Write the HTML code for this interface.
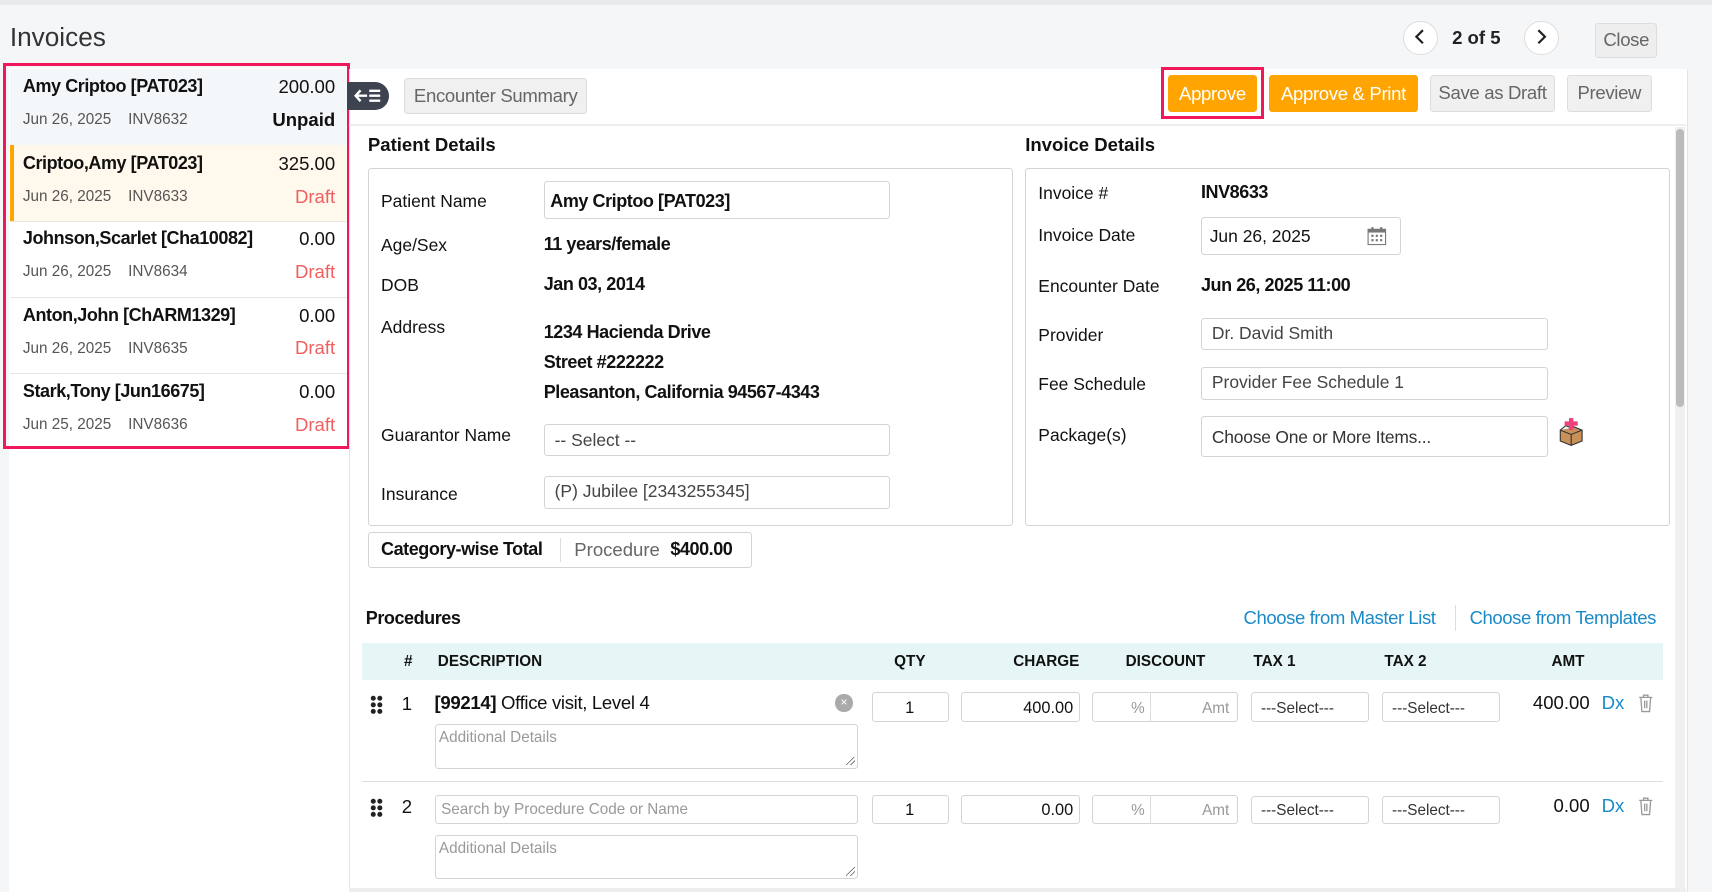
<!DOCTYPE html>
<html><head><meta charset="utf-8"><style>
html,body{margin:0;padding:0;}
body{width:1712px;height:892px;overflow:hidden;background:#f5f6f8;font-family:"Liberation Sans",sans-serif;color:#111;}
#r{position:relative;width:1568px;height:817px;zoom:1.0918;}
.a{position:absolute;white-space:nowrap;}
.in{position:absolute;border:1px solid #d4d4d4;border-radius:3px;background:#fff;box-sizing:border-box;}
.b{font-weight:bold;}
.lbl{font-size:16px;color:#111;}
.btn{position:absolute;border-radius:3px;font-size:17px;box-sizing:border-box;text-align:center;letter-spacing:-0.3px;}
.g{color:#555;}
.ph{color:#999;font-size:14px;}
.nm{font-size:16.5px;letter-spacing:-0.4px;font-weight:bold;}
.rs{position:absolute;width:8px;height:8px;background:linear-gradient(135deg,transparent 45%,#666 46%,#666 52%,transparent 53%,transparent 70%,#666 71%,#666 77%,transparent 78%);}
</style></head><body><div id="r">
<div class="a" style="left:0;top:0;width:1568px;height:5px;background:#e9eaec"></div>
<div class="a" style="left:9px;top:20px;font-size:24px;color:#333">Invoices</div>
<!-- pager -->
<div class="a" style="left:1285px;top:19px;width:30px;height:30px;border:1px solid #ddd;border-radius:50%;background:#fff"></div>
<svg class="a" style="left:1293px;top:26px" width="14" height="16"><path d="M10 2 L4 8 L10 14" fill="none" stroke="#222" stroke-width="2"/></svg>
<div class="a b" style="left:1330px;top:25px;font-size:17px;color:#222">2 of 5</div>
<div class="a" style="left:1396px;top:19px;width:30px;height:30px;border:1px solid #ddd;border-radius:50%;background:#fff"></div>
<svg class="a" style="left:1405px;top:26px" width="14" height="16"><path d="M4 2 L10 8 L4 14" fill="none" stroke="#222" stroke-width="2"/></svg>
<div class="btn" style="left:1461px;top:21px;width:57px;height:32px;background:#eee;border:1px solid #ddd;color:#666;line-height:30px">Close</div>

<!-- left list -->
<div class="a" style="left:8px;top:62px;width:312px;height:755px;background:#fff;border-right:1px solid #e3e3e3"></div>
<div class="a" style="left:9px;top:63px;width:310px;height:70px;background:#f4f7fa"></div>
<div class="a" style="left:9px;top:133px;width:310px;height:70px;background:#fff8ec;border-left:4px solid #ffa500;box-sizing:border-box"></div>
<div class="a" style="left:9px;top:202px;width:310px;height:1px;background:#e6e6e6"></div>
<div class="a" style="left:9px;top:272px;width:310px;height:1px;background:#e6e6e6"></div>
<div class="a" style="left:9px;top:342px;width:310px;height:1px;background:#e6e6e6"></div>
<div class="a" style="left:3px;top:58px;width:318px;height:353px;border:3px solid #f0185a;box-sizing:border-box"></div>

<div class="a nm" style="left:21px;top:70px">Amy Criptoo [PAT023]</div>
<div class="a" style="right:1261px;top:70px;font-size:17px">200.00</div>
<div class="a g" style="left:21px;top:102px;font-size:14px">Jun 26, 2025 &nbsp;&nbsp; INV8632</div>
<div class="a b" style="right:1261px;top:100px;font-size:17px">Unpaid</div>

<div class="a nm" style="left:21px;top:140px">Criptoo,Amy [PAT023]</div>
<div class="a" style="right:1261px;top:140px;font-size:17px">325.00</div>
<div class="a g" style="left:21px;top:172px;font-size:14px">Jun 26, 2025 &nbsp;&nbsp; INV8633</div>
<div class="a" style="right:1261px;top:170px;font-size:17px;color:#f06060">Draft</div>

<div class="a nm" style="left:21px;top:209px">Johnson,Scarlet [Cha10082]</div>
<div class="a" style="right:1261px;top:209px;font-size:17px">0.00</div>
<div class="a g" style="left:21px;top:241px;font-size:14px">Jun 26, 2025 &nbsp;&nbsp; INV8634</div>
<div class="a" style="right:1261px;top:239px;font-size:17px;color:#f06060">Draft</div>

<div class="a nm" style="left:21px;top:279px">Anton,John [ChARM1329]</div>
<div class="a" style="right:1261px;top:279px;font-size:17px">0.00</div>
<div class="a g" style="left:21px;top:311px;font-size:14px">Jun 26, 2025 &nbsp;&nbsp; INV8635</div>
<div class="a" style="right:1261px;top:309px;font-size:17px;color:#f06060">Draft</div>

<div class="a nm" style="left:21px;top:349px">Stark,Tony [Jun16675]</div>
<div class="a" style="right:1261px;top:349px;font-size:17px">0.00</div>
<div class="a g" style="left:21px;top:381px;font-size:14px">Jun 25, 2025 &nbsp;&nbsp; INV8636</div>
<div class="a" style="right:1261px;top:379px;font-size:17px;color:#f06060">Draft</div>

<!-- main panel -->
<div class="a" style="left:320px;top:63px;width:1224px;height:754px;background:#fff;border-left:1px solid #e3e3e3;border-right:1px solid #e3e3e3"></div>
<div class="a" style="left:320px;top:114px;width:1224px;height:1px;background:#eee"></div>
<div class="a" style="left:1534px;top:116px;width:9px;height:700px;background:#f0f0f0"></div>
<div class="a" style="left:1535px;top:118px;width:7px;height:255px;background:#bbb;border-radius:4px"></div>
<div class="a" style="left:318px;top:75px;width:38px;height:26px;background:#3d4450;border-radius:0 13px 13px 0"></div>
<svg class="a" style="left:324px;top:80px" width="26" height="16"><path d="M2 8 H12 M6 3 L1.5 8 L6 13" fill="none" stroke="#fff" stroke-width="2.2"/><path d="M14 3.5 H24 M14 8 H24 M14 12.5 H24" stroke="#fff" stroke-width="2.2"/></svg>
<div class="btn" style="left:370px;top:71px;width:168px;height:33px;background:#f0f0f0;border:1px solid #ddd;color:#666;line-height:31px">Encounter Summary</div>
<div class="a" style="left:1063px;top:61px;width:95px;height:48px;border:3px solid #f0185a;box-sizing:border-box"></div>
<div class="btn" style="left:1070px;top:69px;width:81px;height:34px;background:#ffa400;color:#fff;line-height:34px">Approve</div>
<div class="btn" style="left:1162px;top:69px;width:137px;height:34px;background:#ffa400;color:#fff;line-height:34px">Approve &amp; Print</div>
<div class="btn" style="left:1310px;top:69px;width:114px;height:34px;background:#f0f0f0;border:1px solid #ddd;color:#666;line-height:32px">Save as Draft</div>
<div class="btn" style="left:1435px;top:69px;width:78px;height:34px;background:#f0f0f0;border:1px solid #ddd;color:#666;line-height:32px">Preview</div>

<div class="a b" style="left:337px;top:123px;font-size:17px">Patient Details</div>
<div class="a b" style="left:939px;top:123px;font-size:17px">Invoice Details</div>
<div class="in" style="left:337px;top:154px;width:591px;height:328px"></div>
<div class="in" style="left:939px;top:154px;width:591px;height:328px"></div>

<div class="a lbl" style="left:349px;top:175px">Patient Name</div>
<div class="in" style="left:498px;top:166px;width:317px;height:35px"></div>
<div class="a nm" style="left:504px;top:175px">Amy Criptoo [PAT023]</div>
<div class="a lbl" style="left:349px;top:215px">Age/Sex</div>
<div class="a nm" style="left:498px;top:214px">11 years/female</div>
<div class="a lbl" style="left:349px;top:252px">DOB</div>
<div class="a nm" style="left:498px;top:251px">Jan 03, 2014</div>
<div class="a lbl" style="left:349px;top:290px">Address</div>
<div class="a nm" style="left:498px;top:290px;line-height:27.5px">1234 Hacienda Drive<br>Street #222222<br>Pleasanton, California 94567-4343</div>
<div class="a lbl" style="left:349px;top:389px">Guarantor Name</div>
<div class="in" style="left:498px;top:388px;width:317px;height:30px"></div>
<div class="a" style="left:508px;top:394px;font-size:16px;color:#444">-- Select --</div>
<div class="a lbl" style="left:349px;top:443px">Insurance</div>
<div class="in" style="left:498px;top:436px;width:317px;height:30px"></div>
<div class="a" style="left:508px;top:441px;font-size:16px;color:#444">(P) Jubilee [2343255345]</div>

<div class="a lbl" style="left:951px;top:168px">Invoice #</div>
<div class="a nm" style="left:1100px;top:167px">INV8633</div>
<div class="a lbl" style="left:951px;top:206px">Invoice Date</div>
<div class="in" style="left:1100px;top:199px;width:183px;height:35px"></div>
<div class="a" style="left:1108px;top:207px;font-size:16px">Jun 26, 2025</div>
<svg class="a" style="left:1252px;top:207px" width="18" height="18" viewBox="0 0 18 18"><rect x="1" y="3" width="16" height="14" fill="#fff" stroke="#777"/><rect x="1" y="3" width="16" height="3" fill="#777"/><g fill="#777"><rect x="4" y="1" width="2" height="4"/><rect x="12" y="1" width="2" height="4"/><rect x="4" y="8" width="2" height="2"/><rect x="8" y="8" width="2" height="2"/><rect x="12" y="8" width="2" height="2"/><rect x="4" y="12" width="2" height="2"/><rect x="8" y="12" width="2" height="2"/><rect x="12" y="12" width="2" height="2"/></g></svg>
<div class="a lbl" style="left:951px;top:253px">Encounter Date</div>
<div class="a nm" style="left:1100px;top:252px">Jun 26, 2025 11:00</div>
<div class="a lbl" style="left:951px;top:298px">Provider</div>
<div class="in" style="left:1100px;top:291px;width:318px;height:30px"></div>
<div class="a" style="left:1110px;top:296px;font-size:16px;color:#444">Dr. David Smith</div>
<div class="a lbl" style="left:951px;top:343px">Fee Schedule</div>
<div class="in" style="left:1100px;top:336px;width:318px;height:30px"></div>
<div class="a" style="left:1110px;top:341px;font-size:16px;color:#444">Provider Fee Schedule 1</div>
<div class="a lbl" style="left:951px;top:389px">Package(s)</div>
<div class="in" style="left:1100px;top:381px;width:318px;height:38px"></div>
<div class="a" style="left:1110px;top:391px;font-size:16px;color:#333;letter-spacing:-0.2px">Choose One or More Items...</div>
<svg class="a" style="left:1426px;top:382px" width="26" height="28" viewBox="0 0 26 28"><path d="M3 12 L13 8 L23 12 L23 22 L13 26 L3 22Z" fill="#c8915a" stroke="#333"/><path d="M3 12 L13 16 L23 12 M13 16 V26" fill="none" stroke="#333"/><path d="M3 12 L8 8 L13 10" fill="#fff" stroke="#333"/><rect x="11" y="1" width="4" height="11" fill="#f0407a"/><rect x="7" y="4" width="12" height="4" fill="#f0407a"/></svg>

<div class="in" style="left:337px;top:487px;width:352px;height:33px"></div>
<div class="a nm" style="left:349px;top:494px">Category-wise Total</div>
<div class="a" style="left:513px;top:493px;width:1px;height:22px;background:#ddd"></div>
<div class="a" style="left:526px;top:494px;font-size:17px;color:#666">Procedure</div>
<div class="a nm" style="left:614px;top:494px">$400.00</div>

<div class="a nm" style="left:335px;top:557px">Procedures</div>
<div class="a" style="left:1139px;top:556px;font-size:17px;color:#1a8ac8;letter-spacing:-0.4px">Choose from Master List</div>
<div class="a" style="left:1333px;top:554px;width:1px;height:24px;background:#ddd"></div>
<div class="a" style="left:1346px;top:556px;font-size:17px;color:#1a8ac8;letter-spacing:-0.4px">Choose from Templates</div>

<div class="a" style="left:332px;top:589px;width:1191px;height:34px;background:#e6f5f6"></div>
<div class="a b" style="left:370px;top:598px;font-size:14px">#</div>
<div class="a b" style="left:401px;top:598px;font-size:14px">DESCRIPTION</div>
<div class="a b" style="left:819px;top:598px;font-size:14px">QTY</div>
<div class="a b" style="left:928px;top:598px;font-size:14px">CHARGE</div>
<div class="a b" style="left:1031px;top:598px;font-size:14px">DISCOUNT</div>
<div class="a b" style="left:1148px;top:598px;font-size:14px">TAX 1</div>
<div class="a b" style="left:1268px;top:598px;font-size:14px">TAX 2</div>
<div class="a b" style="left:1421px;top:598px;font-size:14px">AMT</div>

<!-- row 1 -->
<svg class="a" style="left:339px;top:637px" width="12" height="18"><g fill="#222"><circle cx="3" cy="3" r="2.3"/><circle cx="9" cy="3" r="2.3"/><circle cx="3" cy="9" r="2.3"/><circle cx="9" cy="9" r="2.3"/><circle cx="3" cy="15" r="2.3"/><circle cx="9" cy="15" r="2.3"/></g></svg>
<div class="a" style="left:368px;top:635px;font-size:17px">1</div>
<div class="a" style="left:398px;top:634px;font-size:17px;letter-spacing:-0.3px"><b>[99214]</b> Office visit, Level 4</div>
<div class="a" style="left:765px;top:636px;width:16px;height:16px;border-radius:50%;background:#aaa;color:#fff;font-size:11px;text-align:center;line-height:16px">&#215;</div>
<div class="in" style="left:398px;top:663px;width:388px;height:41px"></div>
<div class="rs" style="left:775px;top:693px"></div>
<div class="a ph" style="left:402px;top:668px">Additional Details</div>
<div class="in" style="left:799px;top:634px;width:70px;height:27px"></div><div class="a" style="left:829px;top:640px;font-size:15px">1</div>
<div class="in" style="left:880px;top:634px;width:109px;height:27px"></div><div class="a" style="right:585px;top:640px;font-size:15px">400.00</div>
<div class="in" style="left:1000px;top:634px;width:134px;height:27px"></div><div class="a" style="left:1053px;top:634px;width:1px;height:27px;background:#ddd"></div>
<div class="a ph" style="left:1036px;top:641px">%</div><div class="a ph" style="left:1101px;top:641px">Amt</div>
<div class="in" style="left:1146px;top:634px;width:108px;height:27px"></div><div class="a" style="left:1155px;top:641px;font-size:14px;color:#333">---Select---</div>
<div class="in" style="left:1266px;top:634px;width:108px;height:27px"></div><div class="a" style="left:1275px;top:641px;font-size:14px;color:#333">---Select---</div>
<div class="a" style="right:112px;top:634px;font-size:17px">400.00</div>
<div class="a" style="left:1467px;top:634px;font-size:17px;color:#1a8ac8">Dx</div>
<svg class="a" style="left:1499px;top:635px" width="16" height="18"><path d="M2 4 H14 M6 4 V2 H10 V4 M3.5 4 L4.5 17 H11.5 L12.5 4 M7 7 V14 M9 7 V14" fill="none" stroke="#999" stroke-width="1.2"/></svg>
<div class="a" style="left:332px;top:715px;width:1191px;height:1px;background:#ddd"></div>
<!-- row 2 -->
<svg class="a" style="left:339px;top:731px" width="12" height="18"><g fill="#222"><circle cx="3" cy="3" r="2.3"/><circle cx="9" cy="3" r="2.3"/><circle cx="3" cy="9" r="2.3"/><circle cx="9" cy="9" r="2.3"/><circle cx="3" cy="15" r="2.3"/><circle cx="9" cy="15" r="2.3"/></g></svg>
<div class="a" style="left:368px;top:729px;font-size:17px">2</div>
<div class="in" style="left:398px;top:728px;width:388px;height:27px"></div>
<div class="a ph" style="left:404px;top:734px">Search by Procedure Code or Name</div>
<div class="in" style="left:398px;top:765px;width:388px;height:40px"></div>
<div class="rs" style="left:775px;top:794px"></div>
<div class="a ph" style="left:402px;top:769px">Additional Details</div>
<div class="in" style="left:799px;top:728px;width:70px;height:27px"></div><div class="a" style="left:829px;top:734px;font-size:15px">1</div>
<div class="in" style="left:880px;top:728px;width:109px;height:27px"></div><div class="a" style="right:585px;top:734px;font-size:15px">0.00</div>
<div class="in" style="left:1000px;top:728px;width:134px;height:27px"></div><div class="a" style="left:1053px;top:728px;width:1px;height:27px;background:#ddd"></div>
<div class="a ph" style="left:1036px;top:735px">%</div><div class="a ph" style="left:1101px;top:735px">Amt</div>
<div class="in" style="left:1146px;top:729px;width:108px;height:26px"></div><div class="a" style="left:1155px;top:735px;font-size:14px;color:#333">---Select---</div>
<div class="in" style="left:1266px;top:729px;width:108px;height:26px"></div><div class="a" style="left:1275px;top:735px;font-size:14px;color:#333">---Select---</div>
<div class="a" style="right:112px;top:728px;font-size:17px">0.00</div>
<div class="a" style="left:1467px;top:728px;font-size:17px;color:#1a8ac8">Dx</div>
<svg class="a" style="left:1499px;top:729px" width="16" height="18"><path d="M2 4 H14 M6 4 V2 H10 V4 M3.5 4 L4.5 17 H11.5 L12.5 4 M7 7 V14 M9 7 V14" fill="none" stroke="#999" stroke-width="1.2"/></svg>
<div class="a" style="left:320px;top:813px;width:1224px;height:4px;background:#eee"></div>
</div></body></html>
